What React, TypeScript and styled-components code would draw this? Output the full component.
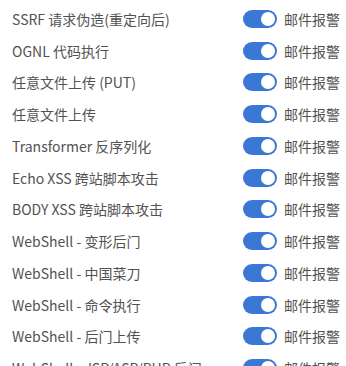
import React from "react"
import styled, { createGlobalStyle } from "styled-components"

const GlobalStyle = createGlobalStyle`
  html, body {
    margin: 0;
    padding: 0;
    background: #ffffff;
    overflow: hidden;
  }
  body {
    font-family: "Noto Sans CJK SC", "Noto Sans", sans-serif;
  }
`

const List = styled.div`
  display: flex;
  flex-direction: column;
  padding: 3px 0 0 12px;
  width: 346px;
  box-sizing: border-box;
`

const Row = styled.div`
  display: flex;
  align-items: center;
  height: 31.75px;
`

const Name = styled.span`
  width: 231px;
  font-size: 14px;
  color: #525252;
  white-space: nowrap;
`

const Switch = styled.span<{ on: boolean }>`
  position: relative;
  display: inline-block;
  width: 34px;
  height: 18px;
  border-radius: 9px;
  background: ${(p) => (p.on ? "#3b78d6" : "#c8c8c8")};

  &::after {
    content: "";
    position: absolute;
    top: 2px;
    left: ${(p) => (p.on ? "18px" : "2px")};
    width: 14px;
    height: 14px;
    border-radius: 50%;
    background: #ffffff;
  }
`

const Label = styled.span`
  margin-left: 7px;
  font-size: 14px;
  color: #525252;
  white-space: nowrap;
`

const rules = [
  "SSRF 请求伪造(重定向后)",
  "OGNL 代码执行",
  "任意文件上传 (PUT)",
  "任意文件上传",
  "Transformer 反序列化",
  "Echo XSS 跨站脚本攻击",
  "BODY XSS 跨站脚本攻击",
  "WebShell - 变形后门",
  "WebShell - 中国菜刀",
  "WebShell - 命令执行",
  "WebShell - 后门上传",
  "WebShell - JSP/ASP/PHP 后门",
]

export default function App() {
  return (
    <>
      <GlobalStyle />
      <List>
        {rules.map((r) => (
          <Row key={r}>
            <Name>{r}</Name>
            <Switch on />
            <Label>邮件报警</Label>
          </Row>
        ))}
      </List>
    </>
  )
}
